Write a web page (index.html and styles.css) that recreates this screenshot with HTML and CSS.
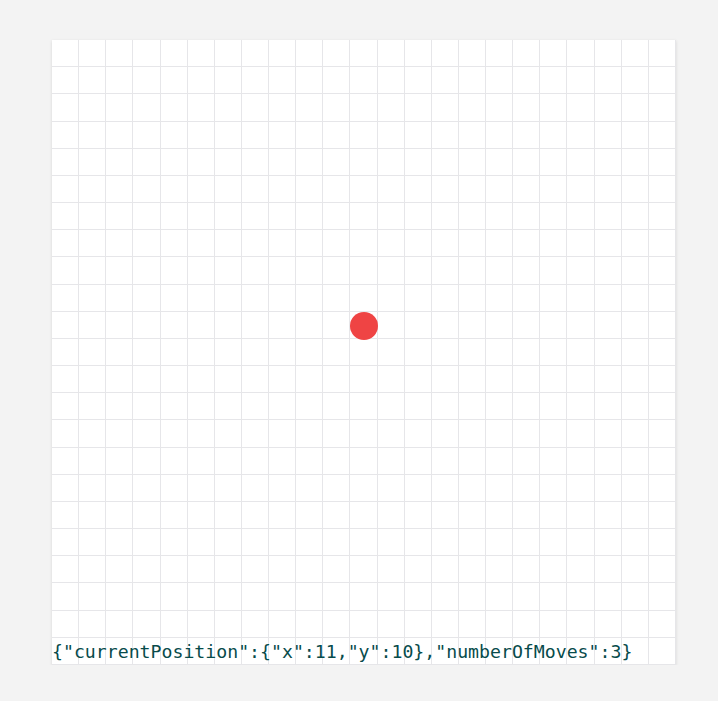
FILE: index.html
```html
<!DOCTYPE html>
<html>
<head>
<meta charset="utf-8">
<link rel="stylesheet" href="styles.css">
</head>
<body>
<div class="board">
  <div class="grid" id="grid"></div>
  <pre class="state">{"currentPosition":{"x":11,"y":10},"numberOfMoves":3}</pre>
</div>
<script>
  var g = document.getElementById('grid');
  for (var r = 0; r < 23; r++) {
    for (var c = 0; c < 23; c++) {
      var d = document.createElement('div');
      d.className = 'cell';
      if (r === 10 && c === 11) {
        var dot = document.createElement('span');
        dot.className = 'dot';
        d.appendChild(dot);
      }
      g.appendChild(d);
    }
  }
</script>
</body>
</html>
```
FILE: styles.css
```css
html, body {
  margin: 0;
  background: #f3f3f3;
}
body {
  padding: 40px 0 0 52px;
}
.board {
  position: relative;
  width: 624px;
  height: 625px;
  background: #fff;
  box-shadow: 0 1px 3px rgba(0, 0, 0, 0.12);
}
.grid {
  display: grid;
  grid-template-columns: repeat(23, 1fr);
  grid-template-rows: repeat(23, 1fr);
  width: 624px;
  height: 625px;
}
.cell {
  position: relative;
  box-sizing: border-box;
  border-right: 1px solid #e6e6e9;
  border-bottom: 1px solid #e6e6e9;
}
.dot {
  position: absolute;
  left: -0.5px;
  top: 0;
  width: 28px;
  height: 28px;
  border-radius: 50%;
  background: #ef4444;
}
.state {
  position: absolute;
  left: 0;
  bottom: 0;
  margin: 0;
  font-family: "DejaVu Sans Mono", "Liberation Mono", monospace;
  font-size: 18.2px;
  line-height: 27px;
  color: #074b4b;
}
```
